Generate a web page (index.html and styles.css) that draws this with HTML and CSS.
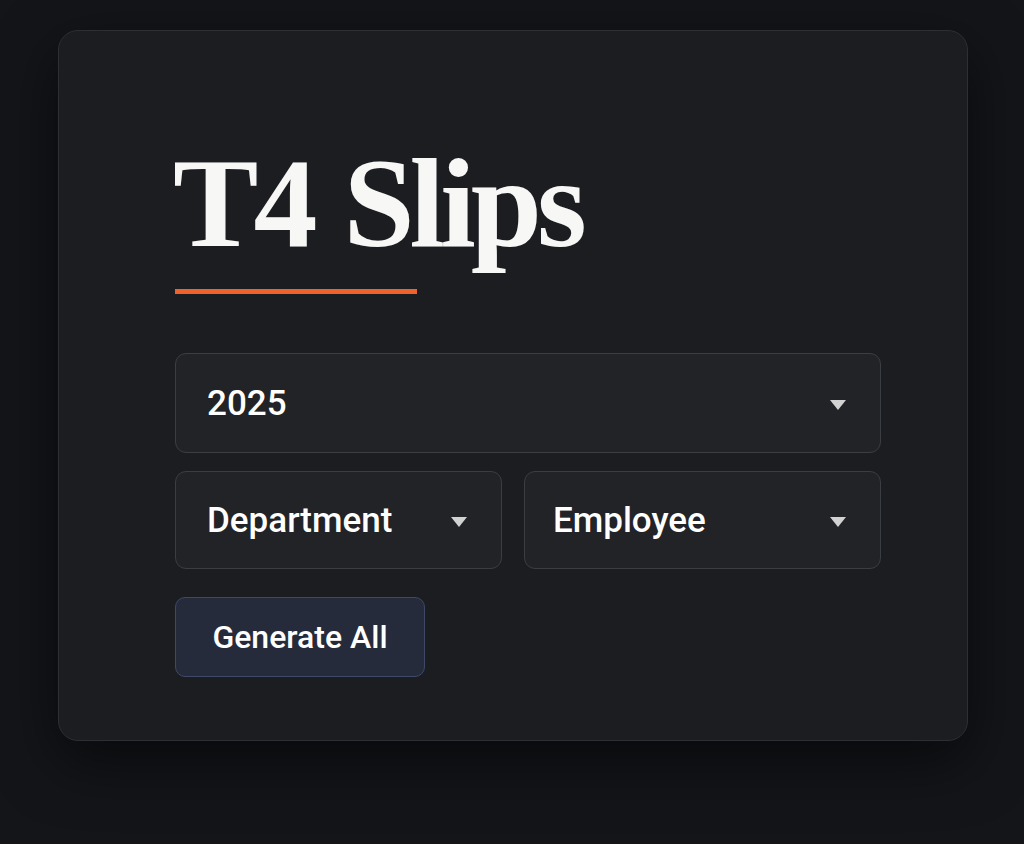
FILE: index.html
```html
<!DOCTYPE html>
<html lang="en">
<head>
  <meta charset="UTF-8">
  <meta name="viewport" content="width=device-width, initial-scale=1.0">
  <title>T4 Slips</title>
  <link rel="stylesheet" href="styles.css">
</head>
<body>
  <div class="card">
    <h1 class="title">T4 Slips</h1>
    <div class="accent"></div>

    <form class="filters" autocomplete="off">
      <div class="select select-full">
        <span>2025</span>
        <span class="caret"></span>
      </div>
      <div class="row">
        <div class="select">
          <span>Department</span>
          <span class="caret"></span>
        </div>
        <div class="select select-right">
          <span>Employee</span>
          <span class="caret"></span>
        </div>
      </div>
      <button type="button" class="button">Generate All</button>
    </form>
  </div>
</body>
</html>
```

FILE: styles.css
```css
body {
  margin: 0;
  height: 844px;
  background: #131519;
  font-family: Roboto, 'Noto Sans', sans-serif;
  color: #fff;
  overflow: hidden;
}

.card {
  box-sizing: border-box;
  width: 910px;
  height: 711px;
  margin: 30px 0 0 58px;
  padding: 0 88px 0 116px;
  background: #1b1d21;
  border: 1px solid #2c2f34;
  border-radius: 20px;
  box-shadow: 0 20px 60px rgba(0, 0, 0, 0.55);
}

.title {
  margin: 0 0 0 -2px;
  padding-top: 108px;
  font-family: 'Liberation Serif', 'Times New Roman', serif;
  font-size: 128px;
  font-weight: bold;
  line-height: 128px;
  letter-spacing: -5px;
  word-spacing: 4px;
  color: #f7f7f5;
}

.accent {
  width: 242px;
  height: 5px;
  margin-top: 22px;
  background: #f0622c;
}

.filters {
  display: flex;
  flex-direction: column;
  align-items: flex-start;
  gap: 18px;
  margin-top: 59px;
}

.select {
  box-sizing: border-box;
  display: flex;
  align-items: center;
  justify-content: space-between;
  height: 98px;
  padding: 0 34px 0 31px;
  background: #212327;
  border: 1px solid #3a3d42;
  border-radius: 11px;
  font-size: 35px;
  font-weight: 500;
}

.select-right {
  padding-left: 28px;
}

.select-full {
  width: 706px;
  height: 100px;
}

.row {
  display: grid;
  grid-template-columns: 327px 357px;
  gap: 22px;
  width: 706px;
}

.caret {
  width: 0;
  height: 0;
  border-left: 8px solid transparent;
  border-right: 8px solid transparent;
  border-top: 10px solid #d2d2d2;
  margin-top: 4px;
}

.button {
  margin-top: 10px;
  width: 250px;
  height: 80px;
  background: #262b3b;
  border: 1px solid #3e4868;
  border-radius: 10px;
  color: #fff;
  font-family: Roboto, 'Noto Sans', sans-serif;
  font-size: 32px;
  font-weight: 500;
}
```
